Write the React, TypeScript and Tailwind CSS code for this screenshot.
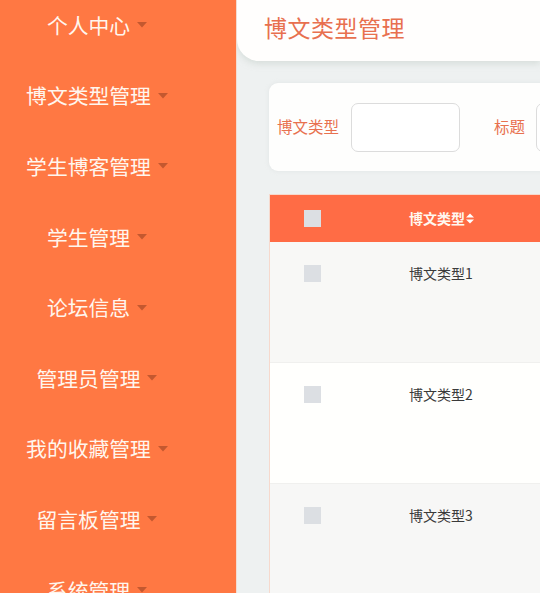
import React from "react";

const menu = [
  "个人中心",
  "博文类型管理",
  "学生博客管理",
  "学生管理",
  "论坛信息",
  "管理员管理",
  "我的收藏管理",
  "留言板管理",
  "系统管理",
];

const rows = [
  { name: "博文类型1", bg: "bg-[#f8f8f6]" },
  { name: "博文类型2", bg: "bg-[#fffffd]" },
  { name: "博文类型3", bg: "bg-[#f7f7f6]" },
];

function Caret() {
  return (
    <svg width="10" height="6" viewBox="0 0 10 6" className="ml-[7px] shrink-0">
      <path d="M0 0 L10 0 L5 5.5 Z" fill="#c4582f" />
    </svg>
  );
}

function SortIcon() {
  return (
    <svg width="8" height="11" viewBox="0 0 8 11" className="ml-[1px]">
      <path d="M0 4.5 L4 0.5 L8 4.5 Z" fill="#fff" />
      <path d="M0 6.5 L4 10.5 L8 6.5 Z" fill="#fff" />
    </svg>
  );
}

export default function App() {
  return (
    <div
      className="flex h-[593px] w-[540px] overflow-hidden bg-[#eef1f1]"
      style={{ fontFamily: '"Noto Sans CJK SC", "Noto Sans", sans-serif' }}
    >
      {/* side menu */}
      <aside className="w-[236px] shrink-0 bg-[#ff7843]">
        <ul className="-mt-[10px] w-[194px]">
          {menu.map((m) => (
            <li key={m} className="flex h-[70.6px] items-center justify-center whitespace-nowrap">
              <span className="text-[20.8px] leading-none text-[#fff6ee]">{m}</span>
              <Caret />
            </li>
          ))}
        </ul>
      </aside>

      {/* main area */}
      <main className="flex min-w-0 flex-1 flex-col overflow-hidden border-l border-[#f3dcd2]">
        <header className="flex h-[61px] shrink-0 items-center rounded-bl-[22px] bg-[#fffefd] pl-[27px] shadow-[0_3px_6px_rgba(200,210,205,0.6)]">
          <h1 className="-mt-[7px] whitespace-nowrap text-[23px] leading-none tracking-[0.5px] text-[#e8704f]">博文类型管理</h1>
        </header>

        <div className="flex flex-col pl-[32px] pt-[22px]">
          {/* search bar */}
          <div className="flex h-[88px] w-[420px] shrink-0 items-center whitespace-nowrap rounded-l-[9px] bg-[#fefefd] pl-[8px] shadow-[0_0_4px_rgba(200,205,205,0.35)]">
            <span className="shrink-0 text-[15.5px] text-[#e8714f]">博文类型</span>
            <div className="ml-[12px] h-[49px] w-[109px] shrink-0 rounded-[7px] border border-[#dcdcdc] bg-white" />
            <span className="ml-[34px] shrink-0 text-[15.5px] text-[#e8714f]">标题</span>
            <div className="ml-[11px] h-[49px] w-[109px] shrink-0 rounded-[7px] border border-[#dcdcdc] bg-white" />
          </div>

          {/* table */}
          <div className="mt-[23px] w-[420px] shrink-0 border-l border-t border-[#f6d9cd] bg-white">
            <div className="flex h-[47px] items-center bg-[#ff6c45]">
              <div className="flex w-[85px] justify-center">
                <div className="h-[17px] w-[17px] bg-[#dcdfe3]" />
              </div>
              <div className="flex items-center pl-[54px]">
                <span className="whitespace-nowrap text-[14px] font-bold text-[#fff8f0]">博文类型</span>
                <SortIcon />
              </div>
            </div>
            {rows.map((r) => (
              <div key={r.name} className={`flex h-[121px] items-start border-b border-[#f0f0ee] pt-[23px] ${r.bg}`}>
                <div className="flex w-[85px] justify-center">
                  <div className="h-[17px] w-[17px] bg-[#dcdfe3]" />
                </div>
                <div className="-mt-[2px] whitespace-nowrap pl-[54px] text-[14px] leading-[20px] text-[#3a3a3a]">{r.name}</div>
              </div>
            ))}
          </div>
        </div>
      </main>
    </div>
  );
}
